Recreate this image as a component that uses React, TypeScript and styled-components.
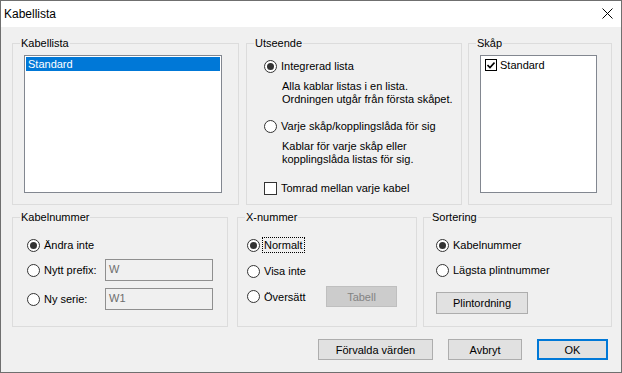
import styled, { createGlobalStyle } from 'styled-components';

const GlobalStyle = createGlobalStyle`
  html, body {
    margin: 0;
    padding: 0;
    background: #ffffff;
  }
  body {
    font-family: "Liberation Sans", Arial, sans-serif;
    font-size: 11px;
    color: #000000;
  }
  * {
    box-sizing: border-box;
  }
`;

function Radio({ checked, children, focused }: { checked?: boolean; children: string; focused?: boolean }) {
  return (
    <OptionLabel>
      <RadioCircle $checked={checked} />
      <OptionText $focused={focused}>{children}</OptionText>
    </OptionLabel>
  );
}

function CheckMark() {
  return (
    <svg width="8" height="8" viewBox="0 0 8 8">
      <path d="M0.5 4 L3 6.5 L7.5 1.5" fill="none" stroke="#000" strokeWidth="1.6" />
    </svg>
  );
}

function App() {
  return (
    <>
      <GlobalStyle />
      <Window>
        <TitleBar>
          <Title>Kabellista</Title>
          <svg width="11" height="11" viewBox="0 0 11 11">
            <path d="M0.5 0.5 L10.5 10.5 M10.5 0.5 L0.5 10.5" stroke="#000" strokeWidth="1" />
          </svg>
        </TitleBar>
        <Client>
          <Row>
            <Group $w={227} $h={168}>
              <Legend>Kabellista</Legend>
              <ListBox $w={198}>
                <ListItem $selected>Standard</ListItem>
              </ListBox>
            </Group>
            <Group $w={216} $h={168} $ml={7}>
              <Legend>Utseende</Legend>
              <GroupBody $pt={8} $pl={17}>
                <OptionRow>
                  <Radio checked>Integrerad lista</Radio>
                </OptionRow>
                <Description $mt={6}>
                  Alla kablar listas i en lista.
                  <br />
                  Ordningen utgår från första skåpet.
                </Description>
                <OptionRow $mt={12}>
                  <Radio>Varje skåp/kopplingslåda för sig</Radio>
                </OptionRow>
                <Description $mt={6}>
                  Kablar för varje skåp eller
                  <br />
                  kopplingslåda listas för sig.
                </Description>
                <OptionRow $mt={14}>
                  <OptionLabel>
                    <CheckBox />
                    <OptionText>Tomrad mellan varje kabel</OptionText>
                  </OptionLabel>
                </OptionRow>
              </GroupBody>
            </Group>
            <Group $w={144} $h={168} $ml={6}>
              <Legend>Skåp</Legend>
              <ListBox $w={117}>
                <CheckItem>
                  <SmallCheck>
                    <CheckMark />
                  </SmallCheck>
                  Standard
                </CheckItem>
              </ListBox>
            </Group>
          </Row>

          <Row $mt={6}>
            <Group $w={216} $h={116}>
              <Legend>Kabelnummer</Legend>
              <GroupBody $pt={13} $pl={14}>
                <OptionRow>
                  <Radio checked>Ändra inte</Radio>
                </OptionRow>
                <OptionRow $mt={6} $h={22}>
                  <FixedOption>
                    <Radio>Nytt prefix:</Radio>
                  </FixedOption>
                  <TextBox>W</TextBox>
                </OptionRow>
                <OptionRow $mt={7} $h={22}>
                  <FixedOption>
                    <Radio>Ny serie:</Radio>
                  </FixedOption>
                  <TextBox>W1</TextBox>
                </OptionRow>
              </GroupBody>
            </Group>
            <Group $w={180} $h={116} $ml={9}>
              <Legend>X-nummer</Legend>
              <GroupBody $pt={13} $pl={9}>
                <OptionRow>
                  <Radio checked focused>
                    Normalt
                  </Radio>
                </OptionRow>
                <OptionRow $mt={10}>
                  <Radio>Visa inte</Radio>
                </OptionRow>
                <OptionRow $mt={7} $h={21}>
                  <FixedOption $w={79}>
                    <Radio>Översätt</Radio>
                  </FixedOption>
                  <Button $w={71} disabled>
                    Tabell
                  </Button>
                </OptionRow>
              </GroupBody>
            </Group>
            <Group $w={189} $h={116} $ml={6}>
              <Legend>Sortering</Legend>
              <GroupBody $pt={13} $pl={12}>
                <OptionRow>
                  <Radio checked>Kabelnummer</Radio>
                </OptionRow>
                <OptionRow $mt={9}>
                  <Radio>Lägsta plintnummer</Radio>
                </OptionRow>
                <OptionRow $mt={14} $h={22}>
                  <Button $w={92} $h={22}>
                    Plintordning
                  </Button>
                </OptionRow>
              </GroupBody>
            </Group>
          </Row>

          <ButtonRow>
            <Button $w={115}>Förvalda värden</Button>
            <Button $w={74}>Avbryt</Button>
            <Button $w={71} $default>
              OK
            </Button>
          </ButtonRow>
        </Client>
      </Window>
    </>
  );
}

const Window = styled.div`
  width: 622px;
  height: 373px;
  border: 1px solid #6f6f6f;
  background: #f0f0f0;
  display: flex;
  flex-direction: column;
`;

const TitleBar = styled.div`
  height: 26px;
  background: #ffffff;
  display: flex;
  align-items: center;
  justify-content: space-between;
  padding: 0 8px 1px 3px;
`;

const Title = styled.span`
  font-size: 12px;
`;

const Client = styled.div`
  flex: 1;
  padding: 10px 9px 0 11px;
  display: flex;
  flex-direction: column;
`;

const Row = styled.div<{ $mt?: number }>`
  display: flex;
  margin-top: ${(p) => p.$mt ?? 0}px;
`;

const Group = styled.fieldset<{ $w: number; $h: number; $ml?: number }>`
  margin: 0 0 0 ${(p) => p.$ml ?? 0}px;
  padding: 0;
  min-width: 0;
  width: ${(p) => p.$w}px;
  height: ${(p) => p.$h}px;
  border: 1px solid #dcdcdc;
`;

const Legend = styled.legend`
  padding: 0 1px;
  margin-left: 7px;
  line-height: 13px;
`;

const GroupBody = styled.div<{ $pt: number; $pl: number }>`
  display: flex;
  flex-direction: column;
  padding: ${(p) => p.$pt}px 0 0 ${(p) => p.$pl}px;
`;

const ListBox = styled.div<{ $w: number }>`
  margin: 5px 0 0 11px;
  width: ${(p) => p.$w}px;
  height: 138px;
  border: 1px solid #828790;
  background: #ffffff;
  padding: 1px;
`;

const ListItem = styled.div<{ $selected?: boolean }>`
  height: 14px;
  line-height: 14px;
  padding-left: 2px;
  background: ${(p) => (p.$selected ? '#0078d7' : 'transparent')};
  color: ${(p) => (p.$selected ? '#ffffff' : '#000000')};
`;

const CheckItem = styled.div`
  display: flex;
  align-items: center;
  gap: 3px;
  height: 16px;
  padding-left: 3px;
`;

const SmallCheck = styled.span`
  width: 12px;
  height: 12px;
  border: 1px solid #000000;
  background: #ffffff;
  display: flex;
  align-items: center;
  justify-content: center;
`;

const OptionRow = styled.div<{ $mt?: number; $h?: number }>`
  display: flex;
  align-items: center;
  height: ${(p) => p.$h ?? 16}px;
  margin-top: ${(p) => p.$mt ?? 0}px;
`;

const OptionLabel = styled.label`
  display: flex;
  align-items: center;
  gap: 4px;
`;

const FixedOption = styled.div<{ $w?: number }>`
  width: ${(p) => p.$w ?? 78}px;
  flex: none;
`;

const OptionText = styled.span<{ $focused?: boolean }>`
  line-height: 14px;
  padding: 0 1px;
  margin-left: -1px;
  outline: ${(p) => (p.$focused ? '1px dotted #000000' : 'none')};
`;

const RadioCircle = styled.span<{ $checked?: boolean }>`
  width: 13px;
  height: 13px;
  flex: none;
  border-radius: 50%;
  border: 1px solid #333333;
  background: #ffffff;
  display: flex;
  align-items: center;
  justify-content: center;

  &::after {
    content: '';
    width: 7px;
    height: 7px;
    border-radius: 50%;
    background: #333333;
    display: ${(p) => (p.$checked ? 'block' : 'none')};
  }
`;

const CheckBox = styled.span`
  width: 13px;
  height: 13px;
  flex: none;
  border: 1px solid #333333;
  background: #ffffff;
`;

const Description = styled.div<{ $mt: number }>`
  margin: ${(p) => p.$mt}px 0 0 18px;
  line-height: 13px;
`;

const TextBox = styled.div`
  width: 108px;
  height: 22px;
  border: 1px solid #8f8f8f;
  background: #f0f0f0;
  color: #6d6d6d;
  padding: 3px 0 0 3px;
`;

const Button = styled.button<{ $w: number; $h?: number; $default?: boolean }>`
  width: ${(p) => p.$w}px;
  height: ${(p) => p.$h ?? 21}px;
  padding: 0;
  font-family: "Liberation Sans", Arial, sans-serif;
  font-size: 11px;
  color: #000000;
  background: #e1e1e1;
  border: ${(p) => (p.$default ? '2px solid #0078d7' : '1px solid #adadad')};

  &:disabled {
    background: #cccccc;
    border-color: #bfbfbf;
    color: #838383;
  }
`;

const ButtonRow = styled.div`
  display: flex;
  justify-content: flex-end;
  gap: 15px;
  margin-top: 12px;
  padding-right: 4px;
`;

export default App;
